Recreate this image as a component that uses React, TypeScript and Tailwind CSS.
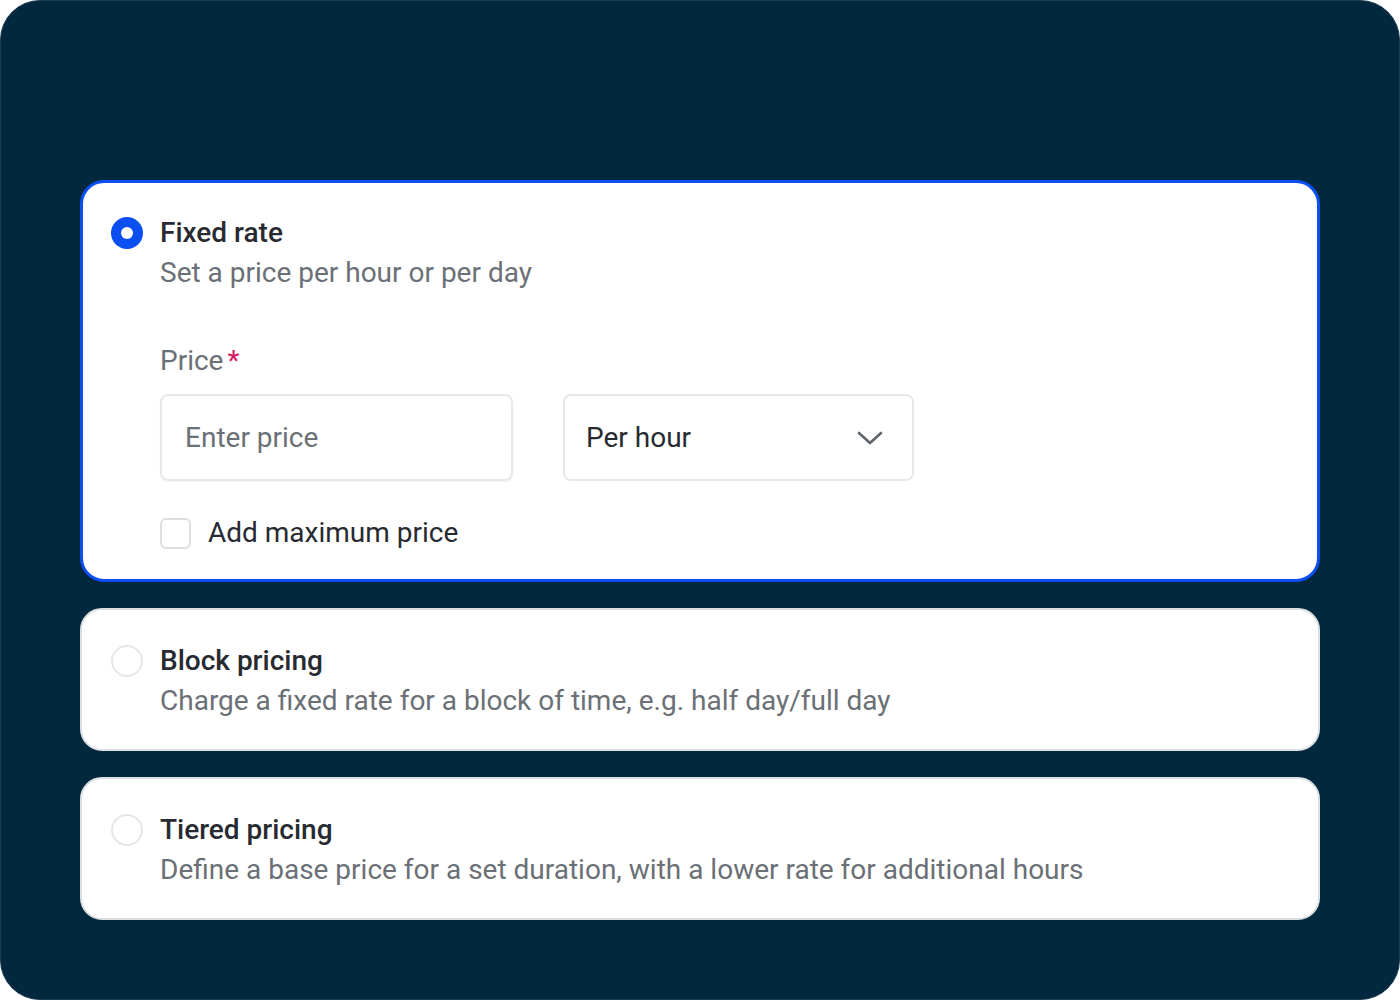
import React from 'react';

const font = { fontFamily: 'Roboto, "Noto Sans", sans-serif' };

interface OptionCardProps {
  title: string;
  subtitle: string;
  selected?: boolean;
  children?: React.ReactNode;
}

function Radio({ selected }: { selected?: boolean }) {
  if (selected) {
    return (
      <div className="w-8 h-8 rounded-full bg-[#0b4ff0] flex items-center justify-center shrink-0">
        <div className="w-3 h-3 rounded-full bg-white" />
      </div>
    );
  }
  return <div className="w-8 h-8 rounded-full border-2 border-[#e4e6e9] bg-white shrink-0" />;
}

function OptionCard({ title, subtitle, selected = false, children }: OptionCardProps) {
  return (
    <div
      className={
        selected
          ? 'bg-white rounded-[24px] border-[3px] border-[#0b4ff0] pt-[30px] pb-[26px] pl-[28px] pr-[28px]'
          : 'bg-white rounded-[22px] border-2 border-[#dcdfe2] pt-[31px] pb-[28px] pl-[29px] pr-[29px]'
      }
    >
      <div className="flex gap-[17px]">
        <div className="h-10 flex items-center">
          <Radio selected={selected} />
        </div>
        <div className="flex flex-col">
          <div className="text-[28px] leading-10 font-medium text-[#272b31]">{title}</div>
          <div className="text-[28px] leading-10 text-[#6b7076]">{subtitle}</div>
          {children}
        </div>
      </div>
    </div>
  );
}

export default function App() {
  return (
    <div className="w-[1400px] h-[1000px] bg-white" style={font}>
      <div className="w-full h-full rounded-[40px] bg-[#02283e] border border-[#1d3b52] px-[79px] pt-[179px] flex flex-col gap-[26px]">
        <OptionCard title="Fixed rate" subtitle="Set a price per hour or per day" selected>
          <div className="mt-12 text-[28px] leading-10 text-[#6b7076]">
            Price<span className="text-[#d6175f] ml-[4px]">*</span>
          </div>
          <div className="mt-[13px] flex gap-[50px]">
            <div className="w-[353px] h-[87px] rounded-lg border-2 border-[#e6e8ea] shadow-[0_1px_2px_rgba(0,0,0,0.06)] flex items-center pl-[23px] text-[28px] text-[#6b7076]">
              Enter price
            </div>
            <div className="w-[351px] h-[87px] rounded-lg border-2 border-[#e6e8ea] flex items-center justify-between pl-[21px] pr-[29px] text-[28px] text-[#272b31]">
              <span>Per hour</span>
              <svg width="26" height="16" viewBox="0 0 26 16" fill="none">
                <path d="M2 3 L13 13 L24 3" stroke="#5f656b" strokeWidth="2.6" strokeLinecap="round" strokeLinejoin="round" />
              </svg>
            </div>
          </div>
          <div className="mt-[32px] flex items-center gap-[17px] h-10">
            <div className="w-[31px] h-[31px] rounded-md border-2 border-[#dcdfe2] bg-white" />
            <span className="text-[28px] text-[#272b31]">Add maximum price</span>
          </div>
        </OptionCard>
        <OptionCard title="Block pricing" subtitle="Charge a fixed rate for a block of time, e.g. half day/full day" />
        <OptionCard title="Tiered pricing" subtitle="Define a base price for a set duration, with a lower rate for additional hours" />
      </div>
    </div>
  );
}
